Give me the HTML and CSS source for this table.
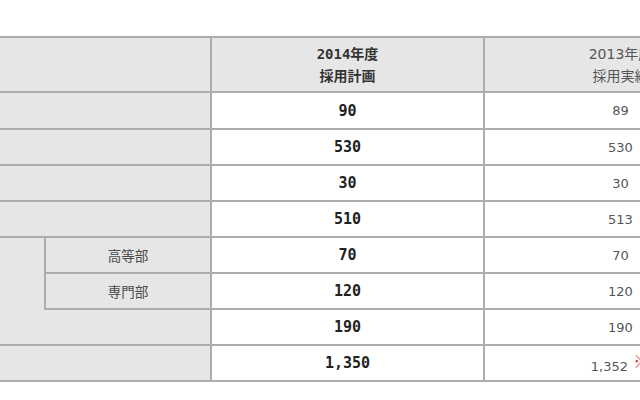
FILE: index.html
```html
<!DOCTYPE html>
<html lang="ja">
<head>
<meta charset="utf-8">
<title>採用計画</title>
<link rel="stylesheet" href="styles.css">
</head>
<body>
<div class="wrap">
<table class="recruit">
  <colgroup>
    <col class="c-a"><col class="c-b"><col class="c-c"><col class="c-d">
  </colgroup>
  <tr class="head">
    <th colspan="2" class="label"></th>
    <th class="plan">2014年度<br>採用計画</th>
    <th class="actual">2013年度<br>採用実績</th>
  </tr>
  <tr class="first"><td colspan="2" class="label"></td><td class="plan">90</td><td class="actual">89</td></tr>
  <tr><td colspan="2" class="label"></td><td class="plan">530</td><td class="actual">530</td></tr>
  <tr><td colspan="2" class="label"></td><td class="plan">30</td><td class="actual">30</td></tr>
  <tr><td colspan="2" class="label"></td><td class="plan">510</td><td class="actual">513</td></tr>
  <tr><td rowspan="2" class="label group"></td><td class="label sub">高等部</td><td class="plan">70</td><td class="actual">70</td></tr>
  <tr><td class="label sub">専門部</td><td class="plan">120</td><td class="actual">120</td></tr>
  <tr><td colspan="2" class="label notop"></td><td class="plan">190</td><td class="actual">190</td></tr>
  <tr><td colspan="2" class="label"></td><td class="plan">1,350</td><td class="actual">1,352 <span class="note">※</span></td></tr>
</table>
</div>
</body>
</html>
```
FILE: styles.css
```css
html, body {
  margin: 0;
  padding: 0;
  width: 640px;
  height: 400px;
  overflow: hidden;
  background: #fff;
}
.wrap {
  padding-top: 36px;
  margin-left: -20px;
}
.recruit {
  border-collapse: collapse;
  table-layout: fixed;
  width: 776px;
  font-family: "DejaVu Sans", "Noto Sans CJK JP", sans-serif;
  font-size: 13px;
  color: #555;
}
.c-a { width: 64px; }
.c-b { width: 166px; }
.c-c { width: 273px; }
.c-d { width: 273px; }
.recruit th,
.recruit td {
  border: 2px solid #adadad;
  padding: 0;
  height: 34px;
  text-align: center;
  vertical-align: middle;
  font-weight: normal;
}
.recruit .first td {
  height: 35px;
}
.recruit .head th {
  height: 52px;
  background: #e6e6e6;
  line-height: 22px;
  font-size: 14px;
  padding-top: 1px;
}
.recruit .label {
  background: #e6e6e6;
}
.recruit .group {
  border-bottom: none;
}
.recruit .notop {
  border-top: none;
}
.recruit .sub {
  font-family: "Noto Sans CJK JP", sans-serif;
  color: #4a4a4a;
  font-size: 13.5px;
}
.recruit .plan {
  font-family: "DejaVu Sans Mono", "Noto Sans CJK JP", monospace;
  font-weight: bold;
  color: #222;
  font-size: 15px;
}
.recruit .head .plan {
  font-size: 14px;
  color: #333;
}
.recruit .actual {
  color: #555;
}
.note {
  color: #d9363e;
  font-family: "Noto Sans CJK JP", sans-serif;
  font-size: 17px;
  margin-left: 1px;
  vertical-align: 3px;
  line-height: 1;
}
```
